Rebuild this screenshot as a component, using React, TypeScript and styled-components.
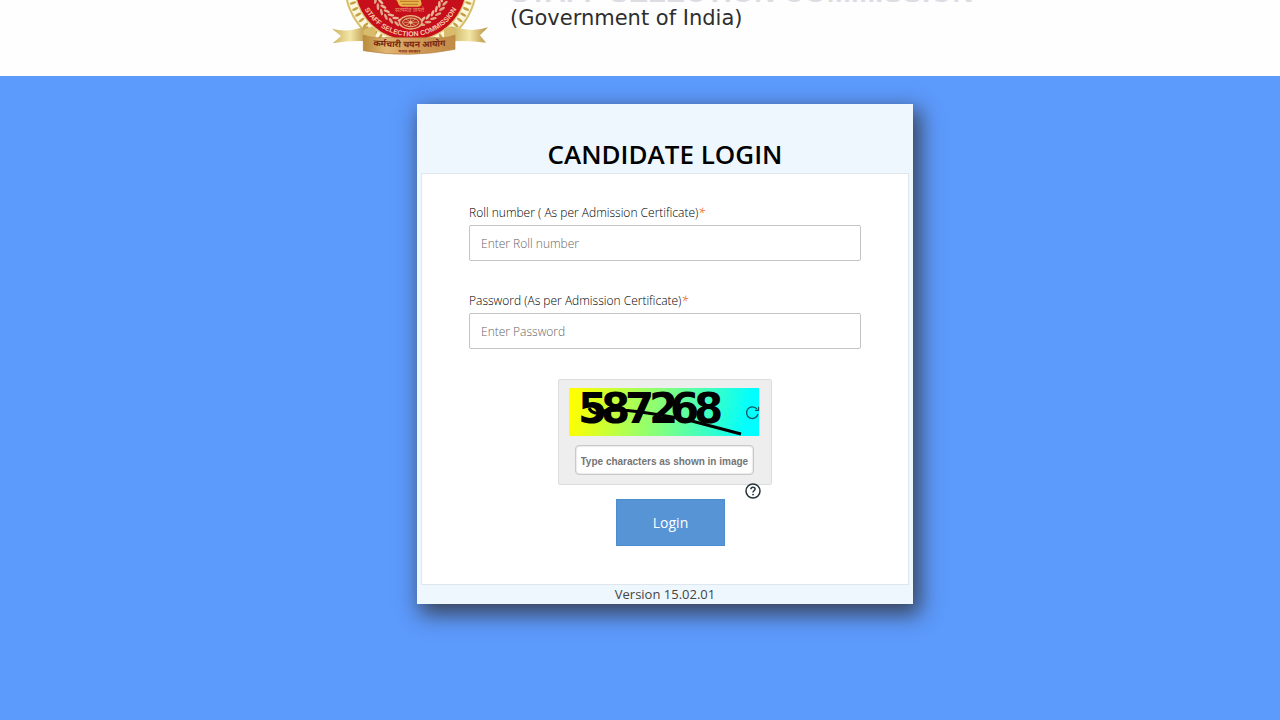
import React from "react";
import styled, { createGlobalStyle } from "styled-components";

const GlobalStyle = createGlobalStyle`
  * { box-sizing: border-box; }
  body {
    margin: 0;
    background: #5c9afc;
    color: #444;
    font-family: "Open Sans", "Noto Sans", sans-serif;
    font-size: 12px;
  }
`;

const Page = styled.div`
  min-height: 100vh;
  display: flex;
  flex-direction: column;
`;

const Header = styled.header`
  height: 76px;
  overflow: hidden;
  background: #fefefe;
  display: flex;
  align-items: flex-start;
  justify-content: center;
  gap: 22px;
  padding-left: 34px;
`;

const Emblem = styled.svg`
  width: 160px;
  height: 60px;
  flex: none;
`;

const Names = styled.div`
  width: 476px;
  margin-top: -24px;
  font-family: "DejaVu Sans", sans-serif;
  white-space: nowrap;
`;

const OrgName = styled.h1`
  margin: 0;
  color: #dcdce2;
  font-family: "Liberation Sans", Arial, sans-serif;
  font-size: 29px;
  line-height: 32px;
`;

const OrgParent = styled.p`
  margin: 0;
  color: #2e2e2e;
  font-size: 21px;
  line-height: 20px;
`;

const Main = styled.main`
  flex: 1;
  display: flex;
  align-items: flex-start;
  justify-content: center;
  padding: 28px 0 28px 50px;
`;

const Card = styled.section`
  width: 496px;
  max-width: 100%;
  padding: 31px 4px 0;
  background: #eef7fe;
  box-shadow: 5px 8px 20px 2px rgba(50, 50, 60, 0.85);
`;

const Title = styled.h2`
  margin: 0;
  color: #000;
  font-size: 26px;
  font-weight: 600;
  line-height: 38px;
  text-align: center;
`;

const Form = styled.form`
  display: flex;
  flex-direction: column;
  align-items: center;
  padding: 29px 47px 38px;
  background: #fff;
  border: 1px solid #dfe7ec;
`;

const Field = styled.div`
  width: 100%;
  display: flex;
  flex-direction: column;
  gap: 2px;
  margin-bottom: 30px;
`;

const Label = styled.label`
  color: #000;
  font-weight: 300;
  line-height: 20px;
`;

const Required = styled.em`
  color: #ee7a34;
  font-weight: 400;
`;

const TextInput = styled.input`
  width: 100%;
  height: 36px;
  padding: 0 11px;
  border: 1px solid #c4c4c4;
  border-radius: 2px;
  background: #fff;
  color: #444;
  font: inherit;
  font-weight: 300;
  &::placeholder { color: #666; opacity: 1; }
`;

const CaptchaArea = styled.div`
  position: relative;
  margin-bottom: 14px;
`;

const CaptchaBox = styled.div`
  display: flex;
  flex-direction: column;
  align-items: center;
  gap: 9px;
  width: 214px;
  padding: 8px 9px 9px;
  border: 1px solid #ddd;
  border-radius: 2px;
  background: #eee;
`;

const CaptchaImage = styled.div`
  position: relative;
  width: 190px;
  height: 48px;
  margin-right: 2px;
  background: linear-gradient(100deg, #ff0 3%, #80ff80 50%, #0ff 93%);
`;

const Drawing = styled.svg`
  display: block;
  width: 100%;
  height: 100%;
  overflow: visible;
`;

const IconButton = styled.button<{ $top: number; $right: number; $size: number }>`
  position: absolute;
  top: ${(p) => p.$top}px;
  right: ${(p) => p.$right}px;
  width: ${(p) => p.$size}px;
  height: ${(p) => p.$size}px;
  padding: 0;
  border: 0;
  background: none;
  cursor: pointer;
`;

const CaptchaInput = styled.input`
  width: 179px;
  height: 30px;
  margin-right: 2px;
  padding: 2px 2px 0 5px;
  border: 1px solid #c8c8c8;
  border-radius: 4px;
  box-shadow: inset 0 0 2px #bbb;
  background: #fff;
  color: #444;
  font: bold 10px "Liberation Sans", Arial, sans-serif;
  &::placeholder { color: #757575; opacity: 1; }
`;

const LoginButton = styled.button`
  width: 109px;
  height: 47px;
  margin-left: 11px;
  border: 1px solid #4c8dd0;
  background: #5794d6;
  color: #fff;
  font: inherit;
  font-size: 14px;
  cursor: pointer;
`;

const Version = styled.footer`
  font-size: 13px;
  line-height: 19px;
  text-align: center;
`;

const beads = Array.from({ length: 27 }, (_, i) => 12 + i * 6);
const leaves = Array.from({ length: 17 }, (_, i) => 10 + i * 10);

function CommissionEmblem() {
  return (
    <Emblem viewBox="30 0 480 180" role="img" aria-label="Staff Selection Commission emblem">
      <defs>
        <linearGradient id="gold" x1="0" x2="1">
          <stop offset="0" stopColor="#b98b3d" />
          <stop offset="0.25" stopColor="#e0b673" />
          <stop offset="0.55" stopColor="#d49a59" />
          <stop offset="1" stopColor="#c08b46" />
        </linearGradient>
        <linearGradient id="tail" x1="0" x2="1">
          <stop offset="0" stopColor="#c9b15c" />
          <stop offset="0.5" stopColor="#f3e7a8" />
          <stop offset="1" stopColor="#b68f3c" />
        </linearGradient>
        <path id="motto" d="M120 -49 A158 158 0 0 0 436 -49" />
        <path id="ribbon" d="M150 136 Q273 148 398 136" />
        <path id="ribbonSmall" d="M215 156 Q273 161 332 156" />
      </defs>
      <circle cx="278" cy="-47" r="200" fill="#d8be69" />
      <circle cx="278" cy="-47" r="194" fill="#fbf6dc" />
      {beads.map((a) => (
        <g key={a} transform={`translate(278 -47) rotate(${a})`}>
          <ellipse cx="182" cy="0" rx="10" ry="4" fill="#c3a246" />
        </g>
      ))}
      <circle cx="278" cy="-47" r="171" fill="#e1c678" />
      <circle cx="278" cy="-47" r="167" fill="#c60f1b" />
      {leaves.map((a) => (
        <g key={a} transform={`translate(278 -32) rotate(${a})`}>
          <ellipse cx="97" cy="-4" rx="4" ry="10" fill="#e9b795" transform="rotate(-28 97 -4)" />
          <ellipse cx="111" cy="4" rx="4" ry="10" fill="#dfa587" transform="rotate(28 111 4)" />
        </g>
      ))}
      <path d="M235 0 L308 0 L311 11 Q309 21 298 20 L252 20 Q241 17 240 8 Z" fill="#e9b24a" />
      <path d="M246 4 H302 M252 13 H300" stroke="#b97722" strokeWidth="3" />
      <text x="275" y="37" textAnchor="middle" fontFamily="Noto Sans" fontSize="18" fill="#e88a70">सत्यमेव जयते</text>
      <ellipse cx="278" cy="67" rx="34" ry="20" fill="#b92c22" stroke="#e8b684" strokeWidth="4" />
      <ellipse cx="278" cy="67" rx="24" ry="13" fill="none" stroke="#e8b684" strokeWidth="3" />
      <path d="M258 67 H298 M278 54 V80 M264 57 L292 77 M292 57 L264 77" stroke="#e8b684" strokeWidth="2" />
      <circle cx="278" cy="67" r="5" fill="#e8b684" />
      <path d="M42 86 Q85 98 136 82 L151 79 V124 Q100 120 44 130 L69 108 Z" fill="url(#tail)" />
      <path d="M510 82 Q463 98 414 82 L398 79 V124 Q450 120 504 128 L486 106 Z" fill="url(#tail)" />
      <path d="M136 92 Q151 75 173 86 L173 115 L136 116 Z" fill="#d9bc6b" />
      <path d="M414 92 Q398 75 378 86 L378 115 L414 116 Z" fill="#d9bc6b" />
      <path d="M136 105 Q160 113 173 113 H378 Q395 111 411 105 L411 148 Q275 176 136 152 Z" fill="url(#gold)" stroke="#b78244" strokeWidth="2" />
      <text fontFamily="Liberation Sans" fontSize="21" fontWeight="700" fill="#f7c9aa">
        <textPath href="#motto" startOffset="50%" textAnchor="middle">STAFF SELECTION COMMISSION</textPath>
      </text>
      <text fontFamily="Noto Sans" fontSize="26" fontWeight="700" fill="#79270f">
        <textPath href="#ribbon" startOffset="50%" textAnchor="middle">कर्मचारी चयन आयोग</textPath>
      </text>
      <text fontFamily="Noto Sans" fontSize="13" fontWeight="700" fill="#8b3416">
        <textPath href="#ribbonSmall" startOffset="50%" textAnchor="middle">भारत सरकार</textPath>
      </text>
    </Emblem>
  );
}

function CaptchaDrawing() {
  return (
    <Drawing viewBox="0 0 190 48" role="img" aria-label="Captcha 587268">
      <text x="9 32 56 80 101 125" y="35" fontFamily="DejaVu Sans" fontWeight="700" fontSize="42">587268</text>
      <path d="M20 20 Q24 28 34 23 C62 20 91 27 119 32 L172 46" fill="none" stroke="#000" strokeWidth="3" />
    </Drawing>
  );
}

export default function App() {
  return (
    <Page>
      <GlobalStyle />
      <Header>
        <CommissionEmblem />
        <Names>
          <OrgName>STAFF SELECTION COMMISSION</OrgName>
          <OrgParent>(Government of India)</OrgParent>
        </Names>
      </Header>
      <Main>
        <Card>
          <Title>CANDIDATE LOGIN</Title>
          <Form onSubmit={(e: React.FormEvent) => e.preventDefault()}>
            <Field>
              <Label htmlFor="roll">
                Roll number ( As per Admission Certificate)<Required>*</Required>
              </Label>
              <TextInput id="roll" placeholder="Enter Roll number" />
            </Field>
            <Field>
              <Label htmlFor="password">
                Password (As per Admission Certificate)<Required>*</Required>
              </Label>
              <TextInput id="password" type="password" placeholder="Enter Password" />
            </Field>
            <CaptchaArea>
              <CaptchaBox>
                <CaptchaImage>
                  <CaptchaDrawing />
                  <IconButton type="button" aria-label="Refresh captcha" $top={17} $right={-1} $size={15}>
                    <Drawing viewBox="0 0 15 15" fill="none" stroke="#12545c">
                      <path d="M12 4.2 A5.8 5.8 0 1 0 13 9" strokeWidth="1.3" />
                      <path d="M13.6 1.8 V5.4 H10" strokeWidth="1.3" />
                    </Drawing>
                  </IconButton>
                </CaptchaImage>
                <CaptchaInput aria-label="Captcha characters" placeholder="Type characters as shown in image" />
              </CaptchaBox>
              <IconButton type="button" aria-label="Captcha help" $top={104} $right={11} $size={16}>
                <Drawing viewBox="0 0 16 16" fill="none" stroke="#26343b">
                  <circle cx="8" cy="8" r="7" strokeWidth="1.5" />
                  <path d="M5.9 6.3 Q6 4.3 8 4.3 Q10.1 4.3 10.1 6.1 Q10.1 7.2 8.9 7.8 Q8 8.3 8 9.4" strokeWidth="1.5" />
                  <circle cx="8" cy="11.6" r="0.9" fill="#26343b" stroke="none" />
                </Drawing>
              </IconButton>
            </CaptchaArea>
            <LoginButton type="submit">Login</LoginButton>
          </Form>
          <Version>Version 15.02.01</Version>
        </Card>
      </Main>
    </Page>
  );
}
